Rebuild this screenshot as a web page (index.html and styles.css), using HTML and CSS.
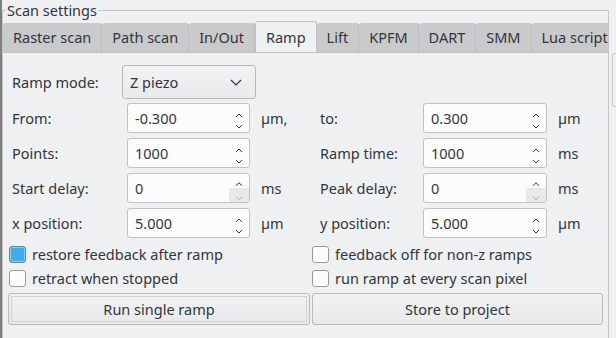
FILE: index.html
```html
<!DOCTYPE html>
<html lang="en">
<head>
    <meta charset="UTF-8">
    <title>Scan settings</title>
    <link rel="stylesheet" href="styles.css">
</head>
<body>
<div class="window">
    <fieldset class="group">
        <legend>Scan settings</legend>

        <div class="tabs">
            <div class="tab">Raster scan</div>
            <div class="tab">Path scan</div>
            <div class="tab">In/Out</div>
            <div class="tab active">Ramp</div>
            <div class="tab">Lift</div>
            <div class="tab">KPFM</div>
            <div class="tab">DART</div>
            <div class="tab">SMM</div>
            <div class="tab">Lua script</div>
        </div>

        <div class="pane">
            <div class="mode-row">
                <span class="label mode-label">Ramp mode:</span>
                <div class="combo">
                    <span>Z piezo</span>
                    <svg width="12" height="7" viewBox="0 0 12 7"><polyline points="1,1 6,6 11,1" fill="none" stroke="#31363b" stroke-width="1.2"/></svg>
                </div>
            </div>

            <div class="form">
                <span class="label">From:</span>
                <div class="spin"><span>-0.300</span><span class="arrows"><svg class="up" width="8" height="5" viewBox="0 0 8 5"><polyline points="1,4.5 4,1.5 7,4.5" fill="none" stroke="#31363b"/></svg><svg class="down" width="8" height="5" viewBox="0 0 8 5"><polyline points="1,0.5 4,3.5 7,0.5" fill="none" stroke="#31363b"/></svg></span></div>
                <span class="unit">µm,</span>
                <span class="label">to:</span>
                <div class="spin"><span>0.300</span><span class="arrows"><svg class="up" width="8" height="5" viewBox="0 0 8 5"><polyline points="1,4.5 4,1.5 7,4.5" fill="none" stroke="#31363b"/></svg><svg class="down" width="8" height="5" viewBox="0 0 8 5"><polyline points="1,0.5 4,3.5 7,0.5" fill="none" stroke="#31363b"/></svg></span></div>
                <span class="unit">µm</span>

                <span class="label">Points:</span>
                <div class="spin"><span>1000</span><span class="arrows"><svg class="up" width="8" height="5" viewBox="0 0 8 5"><polyline points="1,4.5 4,1.5 7,4.5" fill="none" stroke="#31363b"/></svg><svg class="down" width="8" height="5" viewBox="0 0 8 5"><polyline points="1,0.5 4,3.5 7,0.5" fill="none" stroke="#31363b"/></svg></span></div>
                <span class="unit"></span>
                <span class="label">Ramp time:</span>
                <div class="spin"><span>1000</span><span class="arrows"><svg class="up" width="8" height="5" viewBox="0 0 8 5"><polyline points="1,4.5 4,1.5 7,4.5" fill="none" stroke="#31363b"/></svg><svg class="down" width="8" height="5" viewBox="0 0 8 5"><polyline points="1,0.5 4,3.5 7,0.5" fill="none" stroke="#31363b"/></svg></span></div>
                <span class="unit">ms</span>

                <span class="label">Start delay:</span>
                <div class="spin"><span>0</span><span class="arrows at-min"><svg class="up" width="8" height="5" viewBox="0 0 8 5"><polyline points="1,4.5 4,1.5 7,4.5" fill="none" stroke="#31363b"/></svg><svg class="down" width="8" height="5" viewBox="0 0 8 5"><polyline points="1,0.5 4,3.5 7,0.5" fill="none" stroke="#a9abad"/></svg></span></div>
                <span class="unit">ms</span>
                <span class="label">Peak delay:</span>
                <div class="spin"><span>0</span><span class="arrows at-min"><svg class="up" width="8" height="5" viewBox="0 0 8 5"><polyline points="1,4.5 4,1.5 7,4.5" fill="none" stroke="#31363b"/></svg><svg class="down" width="8" height="5" viewBox="0 0 8 5"><polyline points="1,0.5 4,3.5 7,0.5" fill="none" stroke="#a9abad"/></svg></span></div>
                <span class="unit">ms</span>

                <span class="label">x position:</span>
                <div class="spin"><span>5.000</span><span class="arrows"><svg class="up" width="8" height="5" viewBox="0 0 8 5"><polyline points="1,4.5 4,1.5 7,4.5" fill="none" stroke="#31363b"/></svg><svg class="down" width="8" height="5" viewBox="0 0 8 5"><polyline points="1,0.5 4,3.5 7,0.5" fill="none" stroke="#31363b"/></svg></span></div>
                <span class="unit">µm</span>
                <span class="label">y position:</span>
                <div class="spin"><span>5.000</span><span class="arrows"><svg class="up" width="8" height="5" viewBox="0 0 8 5"><polyline points="1,4.5 4,1.5 7,4.5" fill="none" stroke="#31363b"/></svg><svg class="down" width="8" height="5" viewBox="0 0 8 5"><polyline points="1,0.5 4,3.5 7,0.5" fill="none" stroke="#31363b"/></svg></span></div>
                <span class="unit">µm</span>
            </div>

            <div class="checks">
                <label class="check"><span class="box checked"></span>restore feedback after ramp</label>
                <label class="check"><span class="box"></span>feedback off for non-z ramps</label>
                <label class="check"><span class="box"></span>retract when stopped</label>
                <label class="check"><span class="box"></span>run ramp at every scan pixel</label>
            </div>

            <div class="buttons">
                <button class="btn default"><span>Run single ramp</span></button>
                <button class="btn"><span>Store to project</span></button>
            </div>
        </div>
    </fieldset>

    <div class="side">
        <div class="side-box"></div>
    </div>
</div>
</body>
</html>
```

FILE: styles.css
```css
* {
    box-sizing: border-box;
}

body {
    margin: 0;
    background-color: #eff0f1;
    color: #31363b;
    font-family: 'Noto Sans', 'DejaVu Sans', sans-serif;
    font-size: 14.5px;
    overflow: hidden;
}

.window {
    display: flex;
    height: 338px;
    border-left: 2px solid #7d7f81;
}

/* Group box */
.group {
    margin: 0;
    padding: 0;
    min-width: 0;
    width: 607px;
    height: 338px;
    border: 1px solid #c4c6c8;
    border-bottom: none;
    overflow: hidden;
}

.group legend {
    margin-left: 3px;
    padding: 0 1px;
    line-height: 20px;
}

/* Tabs */
.tabs {
    display: flex;
    align-items: flex-end;
    height: 31px;
    margin-top: 1px;
    overflow: hidden;
    white-space: nowrap;
}

.tab {
    flex: none;
    height: 29px;
    line-height: 28px;
    padding: 0 10px;
    background: #c9cacb;
    border-right: 1px solid #bbbdbe;
    border-radius: 3px 3px 0 0;
}

.tab.active {
    height: 32px;
    line-height: 30px;
    margin-bottom: -1px;
    background: #eff0f1;
    border: 1px solid #c0c2c4;
    border-bottom: none;
    position: relative;
}

/* Tab page */
.pane {
    border-top: 1px solid #c0c2c4;
    padding: 12px 5px 0 5px;
}

.label {
    padding-left: 4px;
}

.mode-row {
    display: flex;
    align-items: center;
    height: 34px;
}

.mode-label {
    width: 114px;
}

.combo {
    display: flex;
    align-items: center;
    justify-content: space-between;
    width: 134px;
    height: 34px;
    padding: 0 13px 0 7px;
    background: linear-gradient(#f1f2f3, #e9eaeb);
    border: 1px solid #b7b9bb;
    border-radius: 3px;
}

.form {
    display: grid;
    grid-template-columns: 119px 123px 66px 107px 124px 1fr;
    grid-auto-rows: 30px;
    row-gap: 5px;
    align-items: center;
    margin-top: 4px;
}

.spin {
    display: flex;
    align-items: center;
    justify-content: space-between;
    height: 30px;
    padding-left: 7px;
    background: #fcfcfc;
    border: 1px solid #bfc1c3;
    border-radius: 3px;
}

.arrows {
    display: flex;
    flex-direction: column;
    align-self: stretch;
    width: 20px;
}

.arrows svg {
    display: block;
    flex: 1;
    margin: 0 auto;
    width: 8px;
}

.arrows .up {
    padding-top: 6px;
    height: 14px;
}

.arrows .down {
    padding-top: 2px;
    height: 14px;
}

.arrows.at-min .down {
    width: 20px;
    padding: 7px 6px 0;
    background: #e8e9ea;
    border-radius: 0 0 2px 0;
}

.unit {
    padding-left: 11px;
}

/* Check boxes */
.checks {
    display: grid;
    grid-template-columns: 303px 1fr;
    grid-auto-rows: 24px;
    margin-top: 4px;
}

.check {
    display: flex;
    align-items: center;
    gap: 6px;
    padding-left: 1px;
}

.box {
    width: 17px;
    height: 17px;
    background: #fcfcfc;
    border: 1px solid #989a9c;
    border-radius: 3px;
}

.box.checked {
    background: #3daee9;
    border-color: #5f86a0;
    box-shadow: inset 0 0 0 1px #8fcdef;
}

/* Buttons */
.buttons {
    display: grid;
    grid-template-columns: 302px 291px;
    column-gap: 2px;
    margin-top: 3px;
}

.btn {
    height: 32px;
    padding: 2px;
    font: inherit;
    color: #31363b;
    background: linear-gradient(#f1f2f3, #e8e9ea);
    border: 1px solid #b8babc;
    border-radius: 3px;
}

.btn span {
    display: flex;
    align-items: center;
    justify-content: center;
    height: 100%;
    border: 1px solid transparent;
}

.btn.default span {
    border-color: #cfd1d2;
}

/* Right edge */
.side {
    flex: 1;
    padding: 53px 0 0 3px;
}

.side-box {
    height: 54px;
    border: 1px solid #c4c6c8;
    border-right: none;
    border-radius: 3px 0 0 3px;
}
```
